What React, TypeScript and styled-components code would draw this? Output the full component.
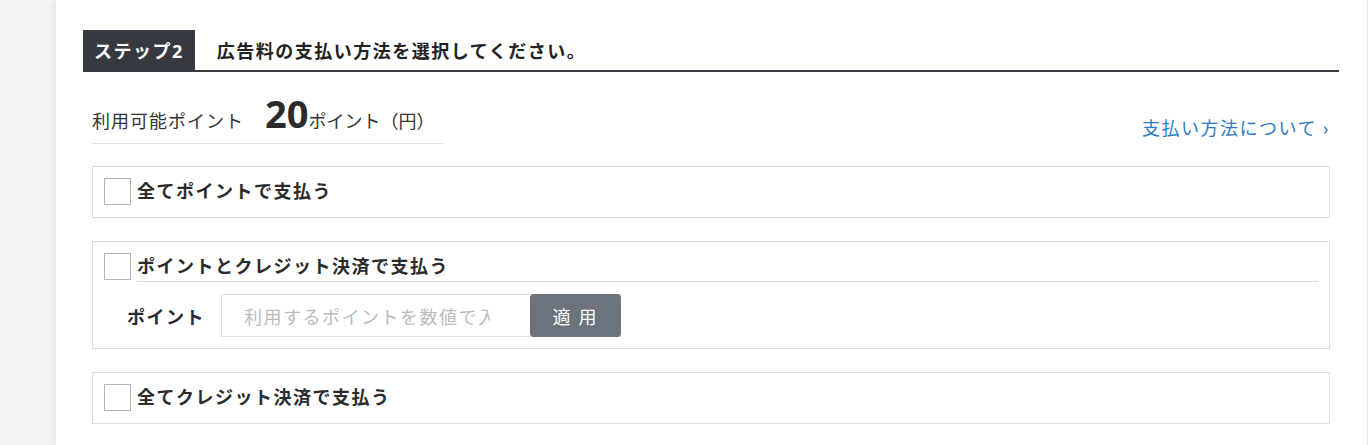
import styled, { createGlobalStyle } from 'styled-components';

const GlobalStyle = createGlobalStyle`
  *, *::before, *::after {
    box-sizing: border-box;
  }
  body {
    margin: 0;
    background: #f5f5f5;
    font-family: "Open Sans", "Noto Sans CJK JP", sans-serif;
    color: #333;
  }
`;

interface OptionProps {
  label: string;
}

const PayOption: React.FC<OptionProps> = ({ label }) => (
  <OptionBox>
    <OptionHead>
      <Check type="checkbox" />
      <OptionLabel>{label}</OptionLabel>
    </OptionHead>
  </OptionBox>
);

const App: React.FC = () => {
  return (
    <>
      <GlobalStyle />
      <Panel>
        <StepHeader>
          <StepBadge>ステップ2</StepBadge>
          <StepTitle>広告料の支払い方法を選択してください。</StepTitle>
        </StepHeader>

        <Content>
          <PointsRow>
            <PointsBox>
              <PointsLabel>利用可能ポイント</PointsLabel>
              <PointsValue>20</PointsValue>
              <PointsUnit>ポイント（円）</PointsUnit>
            </PointsBox>
            <HelpLink href="#">支払い方法について ›</HelpLink>
          </PointsRow>

          <PayOption label="全てポイントで支払う" />

          <OptionBox $tight>
            <OptionHead>
              <Check type="checkbox" />
              <OptionLabel $underline>ポイントとクレジット決済で支払う</OptionLabel>
            </OptionHead>
            <PointInputRow>
              <InputTitle>ポイント</InputTitle>
              <InputGroup>
                <PointInput placeholder="利用するポイントを数値で入力してください" />
                <ApplyButton type="button">適 用</ApplyButton>
              </InputGroup>
            </PointInputRow>
          </OptionBox>

          <PayOption label="全てクレジット決済で支払う" />
        </Content>
      </Panel>
    </>
  );
};

export default App;

const Panel = styled.div`
  margin-left: 56px;
  width: 1312px;
  min-height: 445px;
  background: #fff;
  border-right: 1px solid #e6e6e6;
  box-shadow: -3px 0 8px rgba(0, 0, 0, 0.06);
  padding: 30px 28px 0 27px;
`;

const StepHeader = styled.div`
  display: flex;
  align-items: stretch;
  height: 42px;
  border-bottom: 2px solid #363a40;
`;

const StepBadge = styled.div`
  display: flex;
  align-items: center;
  background: #363a40;
  color: #fff;
  font-size: 18px;
  font-weight: 700;
  letter-spacing: 1.5px;
  padding: 0 11px;
`;

const StepTitle = styled.h2`
  margin: 0 0 0 22px;
  display: flex;
  align-items: center;
  font-size: 18px;
  font-weight: 700;
  letter-spacing: 1.5px;
  color: #222;
`;

const Content = styled.div`
  padding: 0 9px;
  display: flex;
  flex-direction: column;
  gap: 23px;
`;

const PointsRow = styled.div`
  display: flex;
  justify-content: space-between;
  align-items: flex-end;
  margin-top: 22px;
  margin-bottom: -1px;
`;

const PointsBox = styled.div`
  display: flex;
  flex: none;
  align-items: baseline;
  white-space: nowrap;
  width: 351px;
  height: 50px;
  border-bottom: 1px solid #dedede;
  line-height: 1;
`;

const PointsLabel = styled.span`
  font-size: 18px;
  letter-spacing: 1px;
  margin-right: 21px;
`;

const PointsValue = styled.span`
  font-size: 38px;
  font-weight: 700;
  color: #2b2b2b;
`;

const PointsUnit = styled.span`
  font-size: 18px;
`;

const HelpLink = styled.a`
  font-size: 18px;
  letter-spacing: 1.5px;
  color: #2a7bc1;
  text-decoration: none;
  margin: 0 0 7px 0;
  line-height: 1;
  white-space: nowrap;
`;

const OptionBox = styled.div<{ $tight?: boolean }>`
  border: 1px solid #dcdde2;
  padding: 11px 11px ${(p) => (p.$tight ? '11px' : '12px')} 11px;
`;

const OptionHead = styled.label`
  display: flex;
  align-items: flex-start;
  gap: 6px;
`;

const Check = styled.input`
  appearance: none;
  margin: 0;
  flex: none;
  width: 27px;
  height: 27px;
  border: 1px solid #b0b6bd;
  background: #fff;
`;

const OptionLabel = styled.span<{ $underline?: boolean }>`
  flex: 1;
  font-size: 18px;
  font-weight: 700;
  letter-spacing: 1.5px;
  line-height: 27px;
  color: #2b2b2b;
  padding-bottom: ${(p) => (p.$underline ? '1px' : '0')};
  border-bottom: ${(p) => (p.$underline ? '1px solid #dcdde2' : 'none')};
`;

const PointInputRow = styled.div`
  display: flex;
  align-items: center;
  margin-top: 12px;
  padding-left: 23px;
`;

const InputTitle = styled.span`
  font-size: 18px;
  font-weight: 700;
  letter-spacing: 1.5px;
  color: #2b2b2b;
  width: 94px;
`;

const InputGroup = styled.div`
  display: flex;
  width: 400px;
  height: 43px;
  border: 1px solid #e0e0e0;
`;

const PointInput = styled.input`
  flex: 1;
  min-width: 0;
  border: none;
  outline: none;
  padding: 0 40px 0 22px;
  font-family: "Noto Sans CJK JP", sans-serif;
  font-size: 18px;
  letter-spacing: 1.5px;
  color: #333;
  background: #fff;
  &::placeholder {
    color: #bbb;
  }
`;

const ApplyButton = styled.button`
  width: 91px;
  margin: -1px -1px -1px 0;
  border: none;
  border-radius: 4px;
  background: #6c737c;
  color: #fff;
  font-family: "Noto Sans CJK JP", sans-serif;
  font-size: 18px;
  letter-spacing: 2px;
  cursor: pointer;
`;
